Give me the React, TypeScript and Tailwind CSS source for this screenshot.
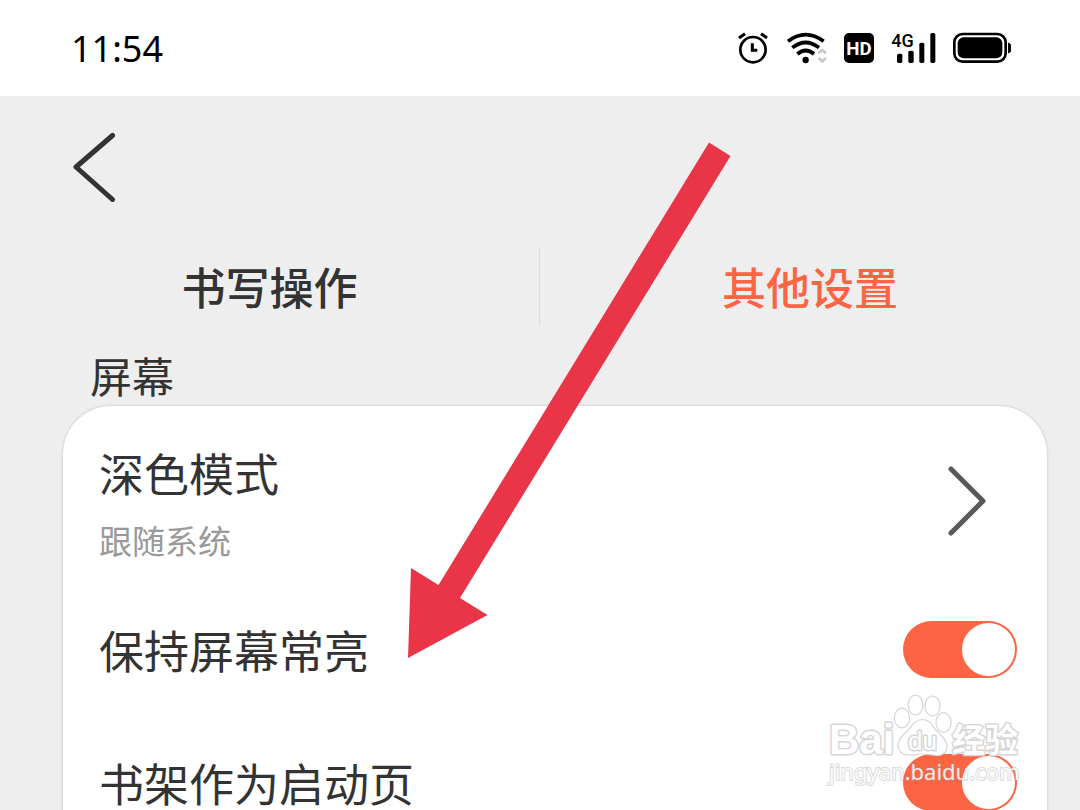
import React, { useState } from "react";

interface Tab {
  id: string;
  label: string;
}

interface SwitchRowProps {
  id: string;
  label: string;
}

const tabs: Tab[] = [
  { id: "writing", label: "书写操作" },
  { id: "other", label: "其他设置" },
];

function StatusBar() {
  return (
    <header className="flex h-24 shrink-0 items-center justify-between bg-white pl-[71px] pr-[69px] text-black">
      <time className="pt-px font-['Noto_Sans',sans-serif] text-4xl leading-10">11:54</time>

      <div className="flex items-center gap-[17px]">
        {/* Alarm */}
        <svg className="h-8 w-8" viewBox="54 37 96 96" fill="none" stroke="currentColor">
          <circle cx="99" cy="90" r="38" strokeWidth="8" />
          <path d="M57 55 L75 42 M141 55 L123 42" strokeWidth="9" />
          <path d="M97 71 V92 H112" strokeWidth="9" />
        </svg>

        {/* Wi-Fi with activity arrows */}
        <svg className="h-8 w-10" viewBox="202 37 120 96" fill="none" stroke="currentColor">
          <path d="M205 65 Q258 25 312 65" strokeWidth="11" />
          <path d="M218 84 Q258 53 298 84" strokeWidth="11" />
          <path d="M233 103 Q258 82 283 103" strokeWidth="11" />
          <circle cx="258" cy="121" r="9.5" fill="currentColor" stroke="none" />
          <path d="M297 101 L308 91 L319 101 M297 115 L308 125 L319 115" stroke="#c9c9c9" strokeWidth="8" />
        </svg>

        {/* HD calling */}
        <svg className="h-8 w-[30px]" viewBox="369 37 90 96">
          <rect x="369" y="40" width="90" height="90" rx="15" fill="currentColor" />
          <text x="414" y="105" textAnchor="middle" fill="white" className="font-['Roboto',sans-serif] text-[56px] font-bold">
            HD
          </text>
        </svg>

        {/* Signal strength */}
        <svg className="h-8 w-[45px]" viewBox="512 37 135 96">
          <text x="513" y="82" fill="currentColor" className="font-['Roboto',sans-serif] text-[54px] font-medium">
            4G
          </text>
          <rect x="530" y="102" width="16" height="28" rx="5" fill="currentColor" />
          <rect x="564" y="93" width="16" height="37" rx="5" fill="currentColor" />
          <rect x="597" y="69" width="15" height="61" rx="5" fill="currentColor" />
          <rect x="630" y="40" width="15" height="90" rx="5" fill="currentColor" />
        </svg>

        {/* Battery */}
        <svg className="h-8 w-[58px]" viewBox="699 37 174 96">
          <rect x="703" y="43" width="154" height="83" rx="25" fill="none" stroke="currentColor" strokeWidth="8" />
          <rect x="713" y="53" width="134" height="63" rx="18" fill="currentColor" />
          <path d="M864 69 Q873 70 873 78 V92 Q873 100 864 101 Z" fill="currentColor" />
        </svg>
      </div>
    </header>
  );
}

function SwitchRow({ id, label }: SwitchRowProps) {
  const [checked, setChecked] = useState(true);

  return (
    <div className="flex h-[133px] items-center justify-between pl-9 pr-[30px]">
      <label htmlFor={id} className="text-[45px] leading-[60px]">
        {label}
      </label>
      <input
        id={id}
        type="checkbox"
        role="switch"
        checked={checked}
        onChange={(e) => setChecked(e.target.checked)}
        className="flex h-[57px] w-[114px] cursor-pointer appearance-none items-center rounded-full bg-zinc-300 px-[2px] before:size-[53px] before:rounded-full before:bg-white checked:justify-end checked:bg-[#fb6544]"
      />
    </div>
  );
}

function Watermark() {
  return (
    <svg className="pointer-events-none absolute left-[824px] top-[690px] h-[100px] w-[204px]" viewBox="824 690 204 100">
      <g fill="white" stroke="#d6d6d6" strokeWidth="1.2">
        <ellipse cx="902" cy="718" rx="7.6" ry="9.8" />
        <ellipse cx="915.5" cy="705" rx="7.4" ry="10" />
        <ellipse cx="932.5" cy="706" rx="7.6" ry="10" />
        <ellipse cx="943.5" cy="722.5" rx="7.6" ry="9.8" />
        <path d="M922.5 719.5 C929 719.5 932 724 935 729 C940 735 947 739 947 746 C947 753 942 756 936 755.5 C930 755 927 754 922 754 C917 754 914 755.5 908 755 C902 754.5 898 751 898 745 C898 738 905 734 910 728 C913 724 916 719.5 922.5 719.5 Z" />
      </g>
      <g fill="white" stroke="#d6d6d6" strokeWidth="3" strokeLinejoin="round" paintOrder="stroke">
        <text x="829" y="754" className="font-['Liberation_Sans',sans-serif] text-[42px] font-bold">
          Bai
        </text>
        <text x="908" y="750" className="font-['Liberation_Sans',sans-serif] text-[26px]">
          du
        </text>
        <text x="952" y="752" className="font-['Noto_Sans_CJK_SC',sans-serif] text-[33px] font-bold">
          经验
        </text>
      </g>
      <text
        x="829"
        y="780"
        fill="white"
        fillOpacity="0.85"
        stroke="#999999"
        strokeOpacity="0.35"
        strokeWidth="2"
        paintOrder="stroke"
        className="font-['Noto_Sans',sans-serif] text-[22px]"
      >
        jingyan.baidu.com
      </text>
    </svg>
  );
}

export default function App() {
  const [activeTab, setActiveTab] = useState("other");

  return (
    <div className="relative flex h-screen flex-col overflow-hidden bg-[#eeeeee] font-['Noto_Sans_CJK_SC',sans-serif] text-[#333333]">
      <StatusBar />

      <main className="flex flex-col">
        {/* Back */}
        <div className="flex h-[151px] items-start px-[72px] pt-9">
          <button type="button" aria-label="返回" className="cursor-pointer">
            <svg className="h-[70px] w-11" viewBox="0 0 44 70" fill="none" stroke="currentColor" strokeWidth="5" strokeLinecap="round" strokeLinejoin="round">
              <path d="M40.500 3.500 L4 35 L40.500 67.500" />
            </svg>
          </button>
        </div>

        {/* Tabs */}
        <div role="tablist" className="grid h-[78px] grid-cols-2 divide-x divide-[#dcdcdc]">
          {tabs.map((tab) => (
            <button
              key={tab.id}
              type="button"
              role="tab"
              aria-selected={activeTab === tab.id}
              onClick={() => setActiveTab(tab.id)}
              className={`cursor-pointer text-[44px] leading-[60px] font-medium ${
                activeTab === tab.id ? "text-[#fb6544]" : ""
              }`}
            >
              {tab.label}
            </button>
          ))}
        </div>

        <section>
          <h2 className="px-[90px] pt-5 pb-px text-[42px] leading-[60px]">屏幕</h2>

          <div className="ml-[63px] mr-[33px] rounded-t-[48px] bg-white shadow-[0_0_3px_rgba(0,0,0,0.2)]">
            <button type="button" className="flex h-[177px] w-full cursor-pointer items-center justify-between pl-9 pr-[60px] pt-[13px] text-left">
              <span className="flex flex-col gap-[17px]">
                <span className="text-[45px] leading-[60px]">深色模式</span>
                <span className="text-[33px] leading-10 text-[#999999]">跟随系统</span>
              </span>
              <svg className="h-[70px] w-10 text-[#59595b]" viewBox="0 0 40 70" fill="none" stroke="currentColor" strokeWidth="5" strokeLinecap="round" strokeLinejoin="round">
                <path d="M4 3 L36 35 L4 67" />
              </svg>
            </button>
            <SwitchRow id="keep-screen-on" label="保持屏幕常亮" />
            <SwitchRow id="bookshelf-start" label="书架作为启动页" />
          </div>
        </section>
      </main>

      <Watermark />

      {/* Pointer arrow */}
      <svg className="pointer-events-none absolute left-[400px] top-[136px] h-[528px] w-[336px]" viewBox="400 136 336 528">
        <polygon points="709,142.500 730.500,156 460,598 487.500,615 408,658 411,568 438.500,585" fill="#ea3549" />
      </svg>
    </div>
  );
}
